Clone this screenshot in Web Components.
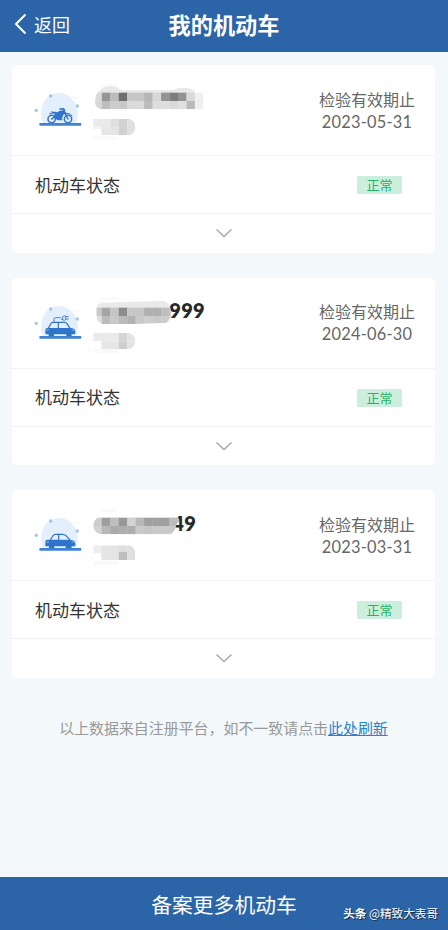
<!DOCTYPE html>
<html lang="zh-CN">
<head>
<meta charset="utf-8">
<title>我的机动车</title>
<style>
html,body{margin:0;height:100%}
body{font-family:"Noto Sans CJK SC","Noto Sans",sans-serif;background:#f3f8fa}
</style>
</head>
<body>
<vehicle-app>
  <nav-header slot="header">我的机动车</nav-header>
  <vehicle-card kind="motorcycle" date="2023-05-31"></vehicle-card>
  <vehicle-card kind="electric" date="2024-06-30" tail="999"></vehicle-card>
  <vehicle-card kind="car" date="2023-03-31" tail="49"></vehicle-card>
  <refresh-note>以上数据来自注册平台，如不一致请点击</refresh-note>
  <add-bar slot="footer">备案更多机动车</add-bar>
</vehicle-app>
<script>
class Base extends HTMLElement {
  constructor(){ super(); this.attachShadow({mode:'open'}); }
  connectedCallback(){ this.shadowRoot.innerHTML = this.render(); }
}

customElements.define('vehicle-app', class extends Base {
  render(){ return `<style>
    :host{display:flex;flex-direction:column;height:930px;overflow:hidden}
    main{flex:1;display:flex;flex-direction:column;gap:25px;padding:13.5px 13px 0 12px}
  </style><slot name="header"></slot><main><slot></slot></main><slot name="footer"></slot>`; }
});

customElements.define('nav-header', class extends Base {
  render(){ return `<style>
    :host{display:grid;grid-template-columns:1fr auto 1fr;align-items:center;height:51.5px;background:#2b65a8;color:#fff;box-sizing:border-box;padding:0 14px 3px}
    .back{display:flex;align-items:center;gap:7px;font-size:18px;line-height:24px}
    svg{display:block}
    h1{margin:0;font-size:22.2px;line-height:32px;font-weight:700}
  </style>
  <div class="back"><svg width="13" height="22" viewBox="0 0 13 22" fill="none" stroke="#fff" stroke-width="2"><path d="M11.5 1.5 2 11l9.5 9.5"/></svg><span>返回</span></div>
  <h1><slot></slot></h1><span></span>`; }
});

const VEHICLES = {
  motorcycle: `<g fill="none" stroke="#2f74cb" stroke-width="4.5" stroke-linecap="round" stroke-linejoin="round">
      <circle cx="79" cy="117" r="11"/><circle cx="128" cy="117" r="11"/>
      <path d="M79 117 93 107M128 117 115 92M104 87l10-1 4 4" /><path d="M73 100q14-5 24 3M119 101q14-4 21 7" stroke-width="3"/></g>
    <path d="M76 94q7 2 13 1l8 2 6-5 14-1 6 8-9 5-4 12-15 3-10-10 4-8q-9 0-13-7z" fill="#2f74cb"/>
    <path d="M90 112l9 7h12" stroke="#2f74cb" stroke-width="4" fill="none"/>`,
  electric: `<g fill="none" stroke="#2f74cb" stroke-width="3.4" stroke-linejoin="round">
      <path d="M69 106 76 93Q78 88 83 88h34q6 0 8 4l9 14M99 88v17" stroke-width="3.6"/>
      <path d="M86 87v-9q0-4 4-4h17M107 79h5M112 71v10q6 2 9-1V69q-4-2-9 2zM121 71h9M121 78h9" stroke-width="2.6"/></g>
    <path d="M60 110q0-5 6-5h69q15 1 15 9v7q0 3-3 3h-8v5q0 3-3 3h-10q-3 0-3-3v-5H86v5q0 3-3 3H73q-3 0-3-3v-5h-7q-3 0-3-3z" fill="#2f74cb"/>
    <path d="M62 111h9M139 111h9" stroke="#82b3ef" stroke-width="3"/>`,
  car: `<g fill="none" stroke="#2f74cb" stroke-width="3.6" stroke-linejoin="round"><path d="M75 105 83 92Q86 88 91 88h21q6 0 10 4l12 13M100 88v17"/></g>
    <path d="M60 109q0-5 6-5h69q15 2 15 11v6q0 3-3 3h-8v4q0 4-4 4h-10q-4 0-4-4v-4H87v4q0 4-4 4H75q-4 0-4-4v-4h-8q-3 0-3-3z" fill="#2f74cb"/>
    <path d="M62 111h9M139 111h9" stroke="#82b3ef" stroke-width="3"/>`
};

customElements.define('vehicle-icon', class extends Base {
  render(){ return `<style>:host{display:block;width:53.3px;height:38.4px}svg{display:block}</style>
  <svg width="53.3" height="38.4" viewBox="20 30 160 115">
    <path d="M138 48q20 5 40 3-7 5-28 8z" fill="#f5f9fe"/>
    <path d="M53 128Q44 110 49 87A52 52 0 0 1 130 48q38 27 24 80z" fill="#e4effc"/>
    <g fill="#a4c3e7"><circle cx="76" cy="48" r="5"/><circle cx="156" cy="78" r="5"/><circle cx="33" cy="91" r="5"/></g>
    ${VEHICLES[this.getAttribute('kind')]}
    <rect x="42" y="129" width="126" height="8" rx="2" fill="#3f83d3"/>
  </svg>`; }
});

/* Censored plate: columns on a 25.4-unit grid, one grey value per cell. */
const MASKS = {
  motorcycle: {
    clip:'M210 66Q212 39 226 30q20-19 50-8 6 8 16 9l150-1q35-14 63 0l5 8h25v50H226q-16-8-16-22z',
    x:205, top:[218,150,188,112,198,198,182,215,147,126,147,218,240], low:[216,190,205,200,218,218,188,222,222,218,224,186,240],
    y:38, cap:'#e8e8e8', small:'M204 117h110q17 8 17 24t-17 25h-86v-18h-24z', sy:116, s:[[235,235,223,210,224],[245,230,228,209,224]]
  },
  electric: {
    clip:'M214 47Q216 31 230 29l180-5q20 2 25 18l3 18q0 18-14 29l-20 1-80 3H232q-17-9-17-22z',
    x:205, top:[200,164,198,140,198,198,176,176,190,200], low:[222,188,200,186,178,202,205,202,204,208],
    y:44, cap:'#e9e9e9', small:'M204 120h110q17 8 17 24t-17 25h-86v-25h-24z', sy:120, s:[[234,234,234,212,228],[240,230,230,206,228]]
  },
  car: {
    clip:'M205 63q1-20 18-26h232l8 6-9 15q-2 20-18 30H226q-20-8-21-25z',
    x:205, top:[205,158,190,152,210,184,160,160,160,188,208], low:[210,184,170,174,174,202,198,202,202,200,208],
    y:38, cap:'#e1e1e1', small:'M204 121h108q19 6 19 26v18H228v-20h-24z', sy:116, s:[[238,228,228,222,224],[238,229,228,190,224]]
  }
};
customElements.define('masked-plate', class extends Base {
  render(){
    const m = MASKS[this.getAttribute('kind')], u = 25.4;
    const row = (list,y,h) => list.map((v,i)=>`<rect x="${m.x+i*u}" y="${y}" width="${u+.5}" height="${h}" fill="rgb(${v},${v},${v})"/>`).join('');
    const tail = this.getAttribute('tail') || '';
    const isCar = this.getAttribute('kind') === 'car';
    return `<style>
      :host{display:grid;width:128px;height:60px}
      svg,b{grid-area:1/1}
      b{font-family:Lato,"Noto Sans",sans-serif;font-size:20px;line-height:24px;font-weight:800;color:#292929;letter-spacing:.3px;justify-self:start;padding-left:${isCar?'81px':'78px'};padding-top:${isCar?'5.5px':'5px'}}
      svg{display:block;z-index:1}
    </style><b>${tail}</b>
    <svg width="128" height="60" viewBox="198 0 384 180">
      <defs><clipPath id="a"><path d="${m.clip}"/></clipPath><clipPath id="b"><path d="${m.small}"/></clipPath></defs>
      <path d="M228 12h50v10h-50zM205 168h75v18h-75z" fill="#fafafa"/>
      <g clip-path="url(#a)"><rect x="200" y="10" width="350" height="90" fill="${m.cap}"/>${row(m.top,m.y,26)}${row(m.low,m.y+25,28)}</g>
      <g clip-path="url(#b)">${row(m.s[0],m.sy,25)}${row(m.s[1],m.sy+25,30)}</g>
    </svg>`;
  }
});

customElements.define('status-tag', class extends Base {
  render(){ return `<style>:host{display:block;width:45px;height:18px;background:#cceedd;color:#25b36b;border-radius:1.5px;text-align:center;font-size:13px;line-height:17px}</style><slot></slot>`; }
});

customElements.define('vehicle-card', class extends Base {
  render(){
    const kind = this.getAttribute('kind');
    return `<style>
      :host{display:block;height:187.6px;background:#fff;border-radius:5px;box-sizing:border-box}
      section{display:flex;box-sizing:border-box}
      .top{height:91px;border-bottom:1px solid #f1f3f4;padding:15px 20px 0 20px}
      vehicle-icon{margin-top:10px}
      masked-plate{margin-left:6px}
      .date{margin-left:auto;margin-top:7.5px;width:96px;text-align:center;font-size:16px;line-height:22px;color:#666;white-space:nowrap}
      .date span{display:block}
      .date span+span{font-family:Lato,"Noto Sans",sans-serif;font-size:16.4px;letter-spacing:.25px;padding-top:1px}
      .status{height:58px;align-items:center;justify-content:space-between;padding:1px 33px 0 23px;border-bottom:1px solid #f1f3f4;font-size:17px;color:#333}
      .status>span{line-height:24px;margin-top:-1px}
      .more{height:38px;align-items:center;justify-content:center}
    </style>
    <section class="top"><vehicle-icon kind="${kind}"></vehicle-icon><masked-plate kind="${kind}" tail="${this.getAttribute('tail')||''}"></masked-plate>
      <div class="date"><span>检验有效期止</span><span>${this.getAttribute('date')}</span></div></section>
    <section class="status"><span>机动车状态</span><status-tag>正常</status-tag></section>
    <section class="more"><svg width="18" height="10" viewBox="0 0 18 10" fill="none" stroke="#aaa" stroke-width="1.6"><path d="m1.5 1.5 7.5 7 7.5-7"/></svg></section>`;
  }
});

customElements.define('refresh-note', class extends Base {
  render(){ return `<style>
    :host{display:block;text-align:center;font-size:14.95px;line-height:22px;color:#999;white-space:nowrap;margin-top:14.2px}
    a{color:#2a82cd;text-decoration:underline;text-underline-offset:1px}
  </style><slot></slot><a href="#">此处刷新</a>`; }
});

customElements.define('add-bar', class extends Base {
  render(){ return `<style>
    :host{display:grid;align-items:center;height:53px;background:#2b65a8;color:#fff;position:relative}
    .label{text-align:center;font-size:20.8px;line-height:30px}
    .mark{position:absolute;right:10px;bottom:7px;font-size:11.6px;line-height:20px;text-shadow:1px 1px 1px #000a;white-space:nowrap}
  </style><div class="label"><slot></slot></div><div class="mark"><b>头条</b> @精致大表哥</div>`; }
});
</script>
</body>
</html>
